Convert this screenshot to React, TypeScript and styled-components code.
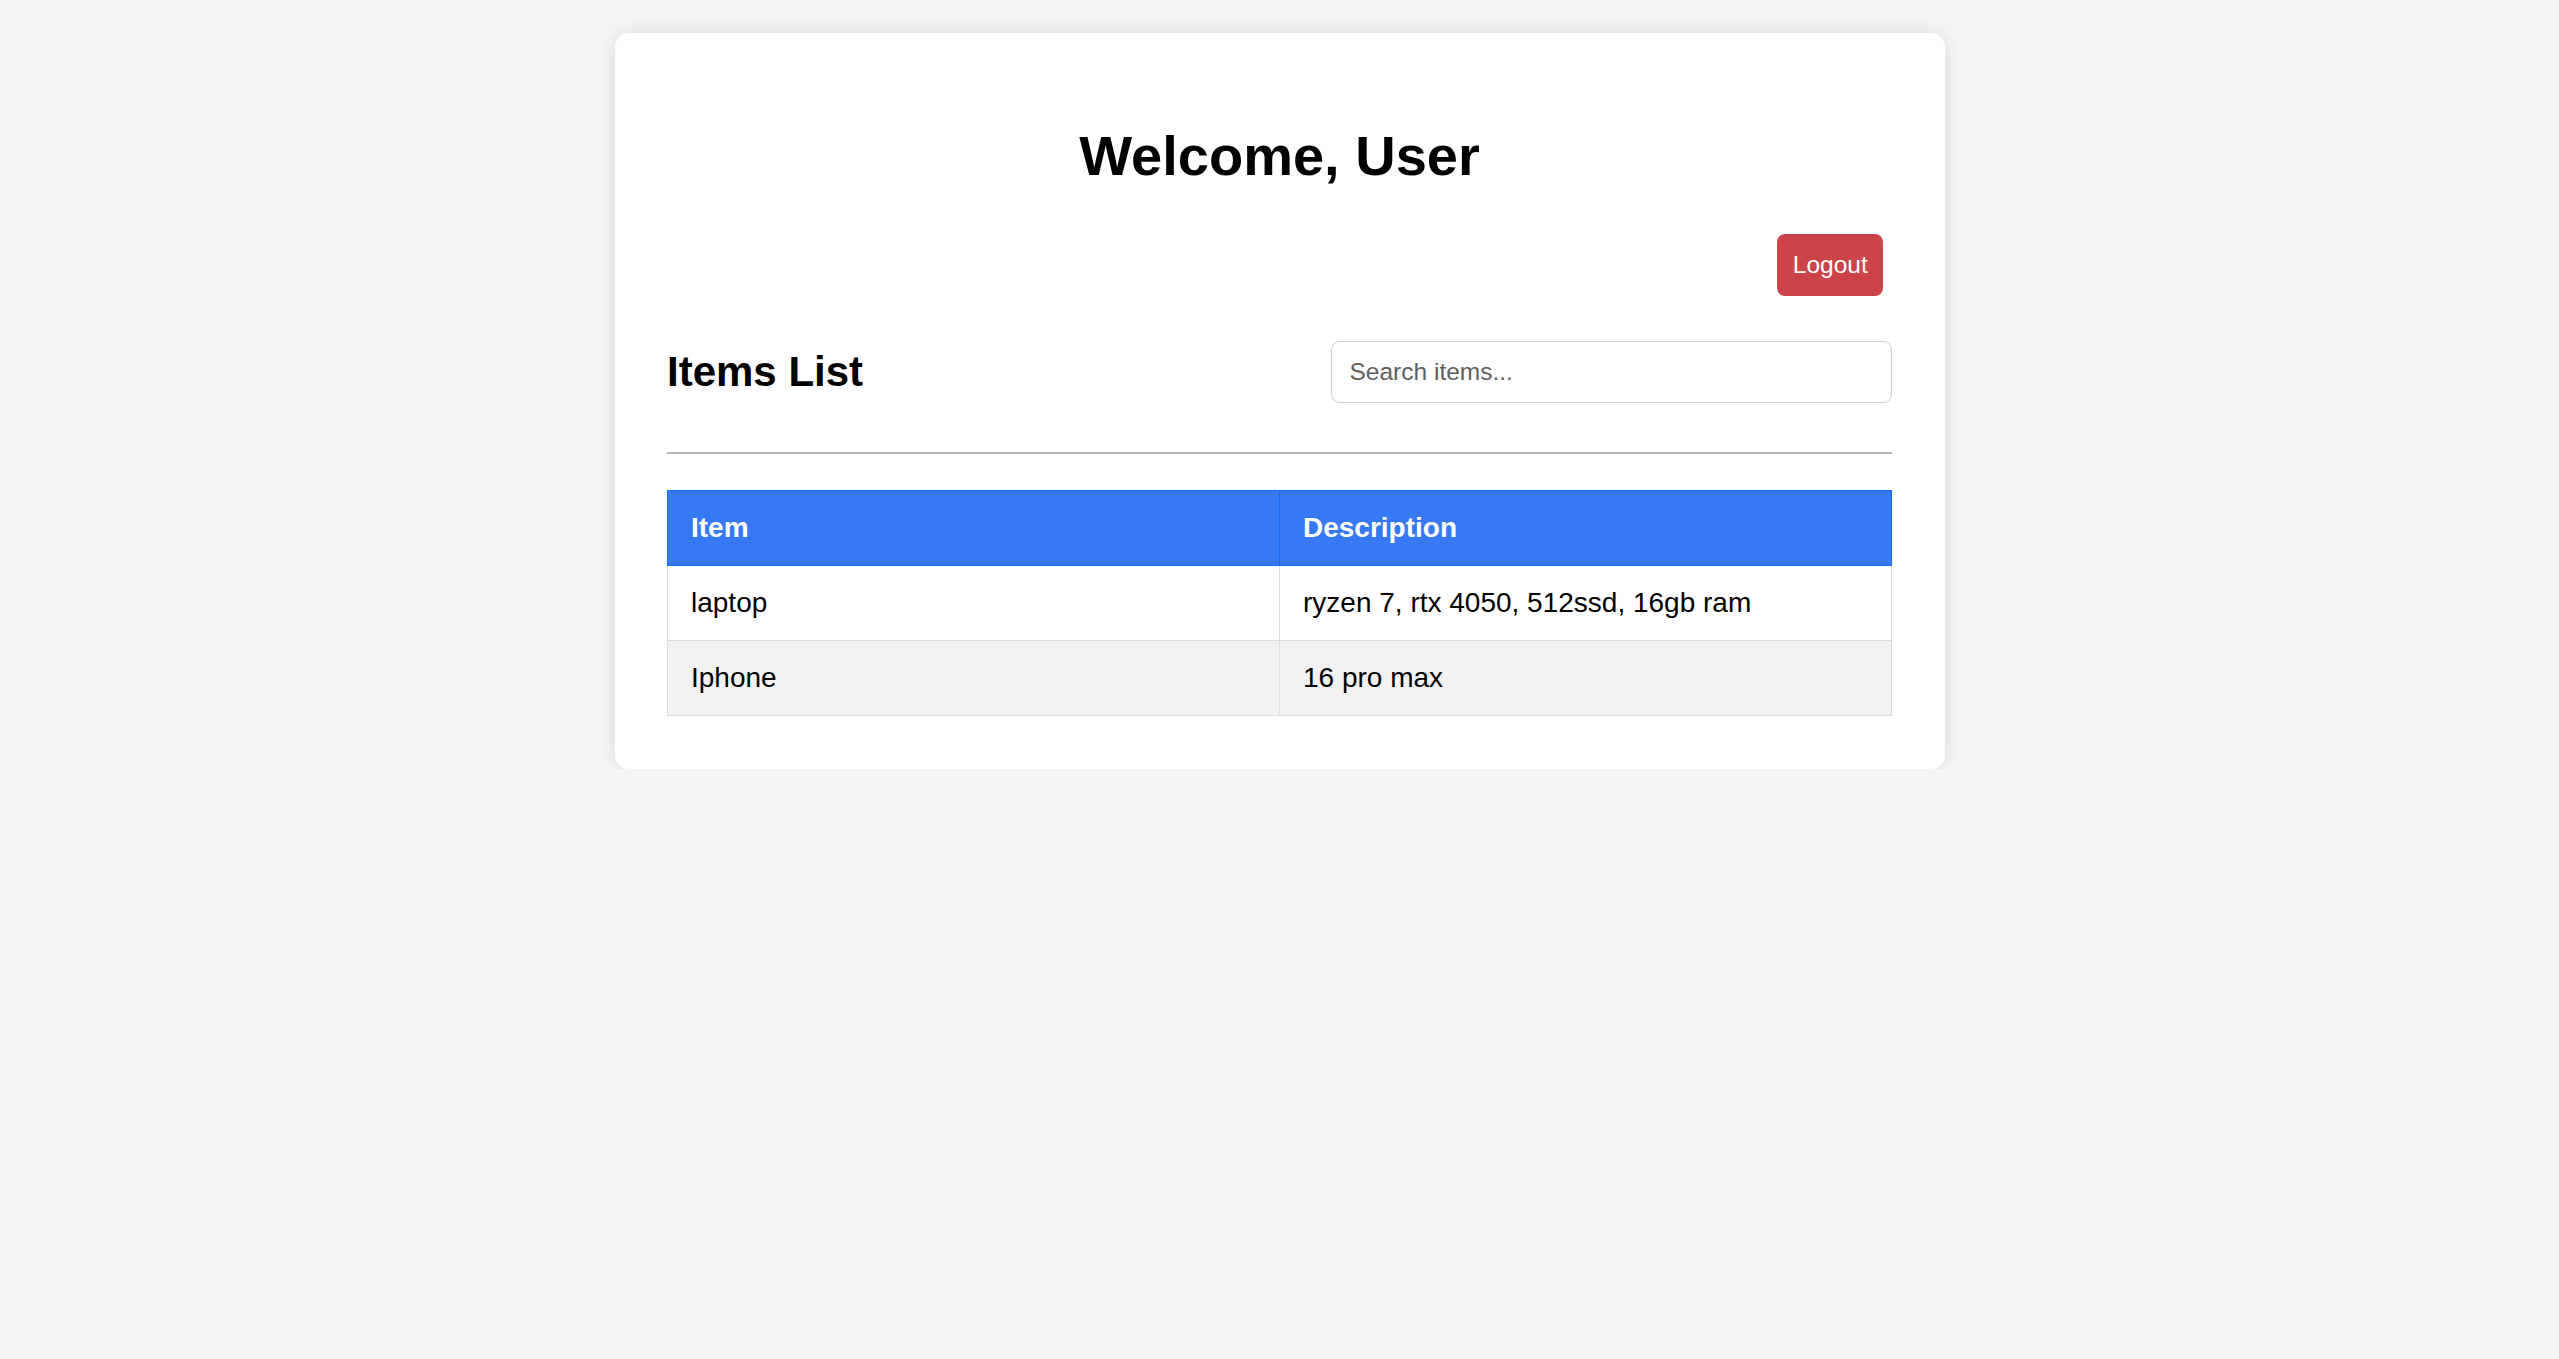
import styled, { createGlobalStyle } from 'styled-components';

const GlobalStyle = createGlobalStyle`
  body {
    margin: 0;
    background: #f4f4f4;
    font-family: "Liberation Sans", Arial, sans-serif;
    color: #000;
  }
`;

const Card = styled.div`
  box-sizing: border-box;
  width: 1330px;
  margin: 33px auto 0;
  padding: 52.5px;
  background: #fff;
  border-radius: 14px;
  box-shadow: 0 0 17px rgba(0, 0, 0, 0.1);
`;

const Title = styled.h1`
  margin: 37.5px 0;
  font-size: 56px;
  font-weight: bold;
  text-align: center;
`;

const TopBar = styled.div`
  display: flex;
  justify-content: flex-end;
`;

const LogoutButton = styled.button`
  box-sizing: border-box;
  width: 106px;
  height: 62px;
  margin: 8.75px;
  padding: 0;
  border: none;
  border-radius: 8px;
  background: #cc444a;
  color: #fff;
  font-family: inherit;
  font-size: 24.5px;
  cursor: pointer;
`;

const ListHeader = styled.div`
  display: flex;
  align-items: center;
  justify-content: space-between;
  margin-top: 8px;
  padding-bottom: 21px;
  border-bottom: 2px solid #b4b4b4;
`;

const SectionTitle = styled.h2`
  margin: 35px 0;
  font-size: 42px;
  font-weight: bold;
`;

const SearchInput = styled.input`
  box-sizing: border-box;
  width: 561px;
  height: 62px;
  padding: 0 17.5px;
  border: 1.75px solid #cccccc;
  border-radius: 8.75px;
  font-family: inherit;
  font-size: 24.5px;
  outline: none;

  &::placeholder {
    color: #5f5f5f;
  }
`;

const Table = styled.table`
  width: 100%;
  margin-top: 36px;
  border-collapse: collapse;
  font-size: 28px;
`;

const HeadCell = styled.th`
  width: 50%;
  padding: 21px 23px;
  border: 1.75px solid #1a6cf5;
  background: #3779f5;
  color: #fff;
  font-weight: bold;
  text-align: left;
`;

const Row = styled.tr<{ $striped: boolean }>`
  background: ${(p) => (p.$striped ? '#f2f2f2' : '#fff')};
`;

const Cell = styled.td`
  padding: 21px 23px;
  border: 1.75px solid #dddddd;
  text-align: left;
`;

const items = [
  { name: 'laptop', description: 'ryzen 7, rtx 4050, 512ssd, 16gb ram' },
  { name: 'Iphone', description: '16 pro max' },
];

export default function App() {
  return (
    <>
      <GlobalStyle />
      <Card>
        <Title>Welcome, User</Title>
        <TopBar>
          <LogoutButton>Logout</LogoutButton>
        </TopBar>
        <ListHeader>
          <SectionTitle>Items List</SectionTitle>
          <SearchInput type="text" placeholder="Search items..." />
        </ListHeader>
        <Table>
          <thead>
            <tr>
              <HeadCell>Item</HeadCell>
              <HeadCell>Description</HeadCell>
            </tr>
          </thead>
          <tbody>
            {items.map((item, i) => (
              <Row key={item.name} $striped={i % 2 === 1}>
                <Cell>{item.name}</Cell>
                <Cell>{item.description}</Cell>
              </Row>
            ))}
          </tbody>
        </Table>
      </Card>
    </>
  );
}
